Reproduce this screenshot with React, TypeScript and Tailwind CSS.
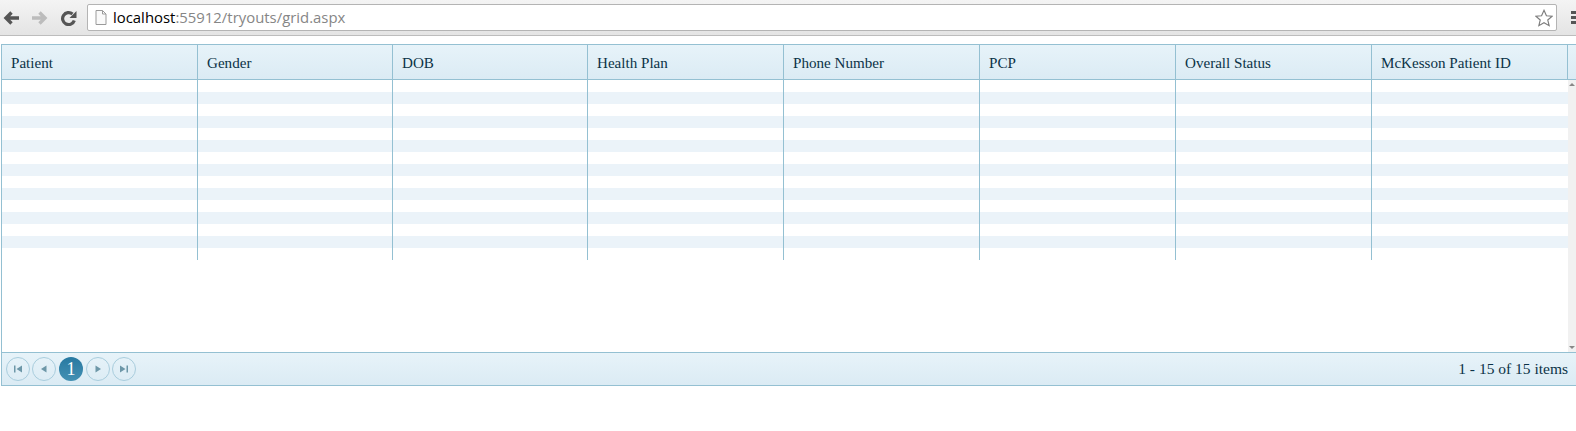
import React from 'react';

const columns = ['Patient', 'Gender', 'DOB', 'Health Plan', 'Phone Number', 'PCP', 'Overall Status', 'McKesson Patient ID'];
const widths = ['w-[196px]', 'w-[195px]', 'w-[195px]', 'w-[196px]', 'w-[196px]', 'w-[196px]', 'w-[196px]', 'w-[196px]'];
const rows = Array.from({ length: 15 }, (_, i) => i);

const PagerButton: React.FC<{ children: React.ReactNode; className?: string }> = ({ children, className }) => (
  <div className={`w-[24px] h-[24px] rounded-full border border-[#a9cddd] flex items-center justify-center ${className ?? ''}`}>
    <svg width="10" height="10" viewBox="0 0 10 10" fill="#6d97a8">
      {children}
    </svg>
  </div>
);

export default function App() {
  return (
    <div className="w-[1576px] h-[431px] overflow-hidden bg-white font-['Liberation_Serif',serif] text-[15.1px] text-[#0c3347]">
      {/* browser toolbar */}
      <div className="h-[36px] bg-gradient-to-b from-[#f4f4f4] to-[#e4e4e4] border-b border-[#bdbdbd] flex items-center">
        <div className="w-[87px] shrink-0 flex items-center pl-[3px] gap-[13px]">
          <svg width="16" height="14" viewBox="0 0 16 14" fill="none" stroke="#555" strokeWidth="3.4">
            <path d="M16 7H4M8.5 1.5 3 7l5.5 5.5" />
          </svg>
          <svg width="16" height="14" viewBox="0 0 16 14" fill="none" stroke="#bcbcbc" strokeWidth="3.4">
            <path d="M0 7h12M7.5 1.5 13 7l-5.5 5.5" />
          </svg>
          <svg width="16" height="16" viewBox="0 0 16 16" fill="none" stroke="#555" strokeWidth="3.2">
            <path d="M13.3 10.5A6 6 0 1 1 11.5 4" />
            <path d="M15.5 1v7H8.5z" fill="#555" stroke="none" />
          </svg>
        </div>
        <div className="w-[1470px] h-[27px] bg-white border border-[#b4b4b4] rounded-[2px] flex items-center font-['Open_Sans',sans-serif] text-[14.9px] shrink-0">
          <svg className="ml-[7px] mr-[6px]" width="12" height="15" viewBox="0 0 12 15" fill="#fafafa" stroke="#9a9a9a">
            <path d="M1 .5h6.5L11 4v10.5H1zM7.5.5V4H11" />
          </svg>
          <span className="text-black">localhost</span>
          <span className="text-[#868686]">:55912/tryouts/grid.aspx</span>
          <svg className="ml-auto mr-[3px]" width="18" height="18" viewBox="0 0 20 19" fill="#fff" stroke="#7d7d7d" strokeWidth="1.3">
            <path d="m10 1 2.7 6 6.3.6-4.8 4.2 1.5 6.2L10 14.7 4.3 18l1.5-6.2L1 7.6 7.3 7z" />
          </svg>
        </div>
        <div className="ml-[14px] flex flex-col gap-[2px] w-[8px] shrink-0">
          <div className="h-[3px] bg-[#555]" />
          <div className="h-[3px] bg-[#555]" />
          <div className="h-[3px] bg-[#555]" />
        </div>
      </div>

      {/* grid */}
      <div className="mt-[8px] ml-[1px] border border-[#94c0d2] border-r-0">
        <div className="h-[35px] flex bg-gradient-to-b from-[#e7f3f9] to-[#dbebf4] border-b border-[#94c0d2]">
          {columns.map((c, i) => (
            <div key={c} className={`${widths[i]} shrink-0 border-r border-[#94c0d2] pl-[9px] pt-[2px] flex items-center`}>
              {c}
            </div>
          ))}
        </div>
        <div className="h-[272px] flex">
          <div className="flex-1">
            {rows.map((r) => (
              <div key={r} className={`h-[12px] flex ${r % 2 === 1 ? 'bg-[#ebf3f9]' : 'bg-white'}`}>
                {columns.map((c, i) => (
                  <div key={c} className={`${widths[i]} shrink-0 ${i < 7 ? 'border-r border-[#94c0d2]' : ''}`} />
                ))}
              </div>
            ))}
          </div>
          <div className="w-[8px] bg-[#f1f1f1] flex flex-col justify-between items-center py-[3px]">
            <div className="w-0 h-0 border-x-[3px] border-x-transparent border-b-[3px] border-b-[#888]" />
            <div className="w-0 h-0 border-x-[3px] border-x-transparent border-t-[3px] border-t-[#888]" />
          </div>
        </div>
        <div className="h-[33px] flex items-center justify-between bg-gradient-to-b from-[#e7f3f9] to-[#dbebf4] border-t border-[#94c0d2] pl-[4px] pr-[8px]">
          <div className="flex items-center">
            <PagerButton>
              <path d="M1 1.5h1.5v7H1zM9 1.5v7L3.5 5z" />
            </PagerButton>
            <PagerButton className="ml-[2px]">
              <path d="M7.5 1.5v7L2 5z" />
            </PagerButton>
            <div className="ml-[3px] w-[24px] h-[24px] rounded-full bg-gradient-to-b from-[#2779a1] to-[#4390b3] text-white text-[18px] flex items-center justify-center">
              1
            </div>
            <PagerButton className="ml-[3px]">
              <path d="M2.5 1.5v7L8 5z" />
            </PagerButton>
            <PagerButton className="ml-[2px]">
              <path d="M1 1.5v7L6.5 5zM7.5 1.5H9v7H7.5z" />
            </PagerButton>
          </div>
          <span className="text-[15.5px]">1 - 15 of 15 items</span>
        </div>
      </div>
    </div>
  );
}
